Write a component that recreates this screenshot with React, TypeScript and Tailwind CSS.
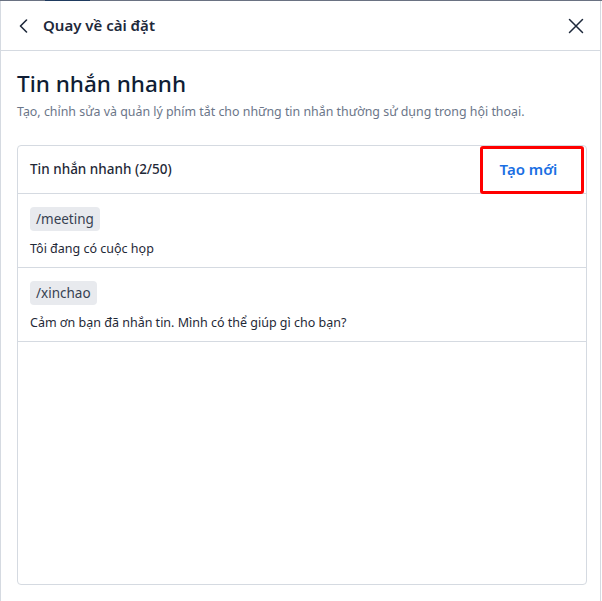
import React from 'react';

type QuickReply = { shortcut: string; message: string };

const replies: QuickReply[] = [
  { shortcut: '/meeting', message: 'Tôi đang có cuộc họp' },
  { shortcut: '/xinchao', message: 'Cảm ơn bạn đã nhắn tin. Mình có thể giúp gì cho bạn?' },
];

const ChevronLeft = () => (
  <svg width="12" height="14" viewBox="0 0 12 14" fill="none" stroke="#1e293b" strokeWidth="1.6" strokeLinecap="round" strokeLinejoin="round">
    <path d="M8.5 1 L2.5 7 L8.5 13" />
  </svg>
);

const CloseIcon = () => (
  <svg width="16" height="16" viewBox="0 0 16 16" fill="none" stroke="#1e293b" strokeWidth="1.5" strokeLinecap="round">
    <path d="M1.5 1.5 L14.5 14.5 M14.5 1.5 L1.5 14.5" />
  </svg>
);

export default function App() {
  return (
    <div
      className="w-[602px] h-[601px] overflow-hidden bg-white"
      style={{ fontFamily: '"Noto Sans", "Open Sans", sans-serif' }}
    >
      {/* top edge of the page behind the panel */}
      <div className="h-px bg-gray-500 flex">
        <div className="w-[45px]" />
        <div className="w-[45px] bg-[#1e3a5f]" />
      </div>
      <div className="w-[601px] h-[600px] border-x border-[#d5dae1] flex flex-col">
        {/* header */}
        <div className="h-[50px] shrink-0 border-b border-[#d5dae1] flex items-center pl-[17px] pr-[16px]">
          <ChevronLeft />
          <span className="ml-[13px] text-[15px] font-semibold text-[#1e293b]">Quay về cài đặt</span>
          <div className="ml-auto flex items-center">
            <CloseIcon />
          </div>
        </div>

        <div className="flex-1 flex flex-col pl-4 pr-[13px] pt-[17px] pb-4 min-h-0">
          <h1 className="text-[22.5px] leading-[32px] font-medium text-[#0f1d35]">Tin nhắn nhanh</h1>
          <p className="mt-[3px] text-[12.4px] leading-[18px] text-[#6b7689]">
            Tạo, chỉnh sửa và quản lý phím tắt cho những tin nhắn thường sử dụng trong hội thoại.
          </p>

          <div className="mt-[24px] flex-1 flex flex-col border border-[#d5dae1] rounded-[4px]">
            <div className="h-[48px] shrink-0 border-b border-[#d5dae1] flex items-center pl-[12px] pr-[2px]">
              <span className="text-[13.5px] font-medium text-[#1f2937]">Tin nhắn nhanh (2/50)</span>
              <button className="ml-auto w-[104px] h-[48px] border-[3px] border-[#ff0000] rounded-[3px] flex items-center justify-center pr-[7px]">
                <span className="text-[15px] font-semibold text-[#1a6fe3]">Tạo mới</span>
              </button>
            </div>
            {replies.map((r) => (
              <div key={r.shortcut} className="h-[74px] shrink-0 border-b border-[#d5dae1] px-[12px] pt-[12px]">
                <span className="inline-flex items-center h-[24px] px-[6px] rounded-[4px] bg-[#e8eaee] text-[13.5px] text-[#374151]">
                  {r.shortcut}
                </span>
                <p className="mt-[9px] text-[12.5px] leading-[18px] text-[#1f2937]">{r.message}</p>
              </div>
            ))}
          </div>
        </div>
      </div>
    </div>
  );
}
